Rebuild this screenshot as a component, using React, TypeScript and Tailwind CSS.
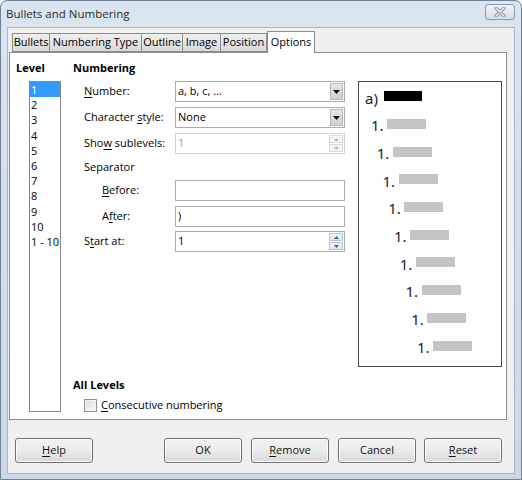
import React from "react";

function Mn({ text, idx }: { text: string; idx: number }) {
  return (
    <>
      {text.slice(0, idx)}
      <span className="underline underline-offset-[2px] decoration-[1px]">{text[idx]}</span>
      {text.slice(idx + 1)}
    </>
  );
}

function DropBtn() {
  return (
    <div className="ml-auto mr-[1px] w-[13px] h-[17px] bg-gradient-to-b from-[#e6e6e6] to-[#cfcfcf] border border-[#b9b9b9] flex items-center justify-center">
      <svg width="7" height="4" viewBox="0 0 7 4">
        <path d="M0 0 L7 0 L3.5 4 Z" fill="#111" />
      </svg>
    </div>
  );
}

function Spin({ enabled }: { enabled: boolean }) {
  const c = enabled ? "#3f5f8c" : "#b8b8b8";
  return (
    <div className="ml-auto mr-[1px] w-[14px] h-[17px] flex flex-col gap-[1px]">
      <div className={`flex-1 flex items-center justify-center border ${enabled ? "border-[#b7c3d3] bg-gradient-to-b from-[#f3f6fa] to-[#dfe6ee]" : "border-[#dadada] bg-[#f4f4f4]"}`}>
        <svg width="5" height="3" viewBox="0 0 5 3">
          <path d="M0 3 L5 3 L2.5 0 Z" fill={c} />
        </svg>
      </div>
      <div className={`flex-1 flex items-center justify-center border ${enabled ? "border-[#b7c3d3] bg-gradient-to-b from-[#f3f6fa] to-[#dfe6ee]" : "border-[#dadada] bg-[#f4f4f4]"}`}>
        <svg width="5" height="3" viewBox="0 0 5 3">
          <path d="M0 0 L5 0 L2.5 3 Z" fill={c} />
        </svg>
      </div>
    </div>
  );
}

function Field({ children, disabled }: { children?: React.ReactNode; disabled?: boolean }) {
  return (
    <div
      className={`w-[170px] h-[21px] bg-white border flex items-center pl-[2px] ${
        disabled ? "border-[#d3d3d3] text-[#a0a0a0]" : "border-[#abadb3]"
      }`}
    >
      {children}
    </div>
  );
}

function Btn({ children, className = "" }: { children: React.ReactNode; className?: string }) {
  return (
    <div
      className={`w-[78px] h-[25px] rounded-[3px] border border-[#707070] bg-gradient-to-b from-[#f2f2f2] via-[#ebebeb] to-[#d9d9d9] shadow-[inset_0_0_0_1px_#fcfcfc] flex items-center justify-center text-[#111] ${className}`}
    >
      {children}
    </div>
  );
}

export default function App() {
  const levels = ["1", "2", "3", "4", "5", "6", "7", "8", "9", "10", "1 - 10"];
  const tabs = ["Bullets", "Numbering Type", "Outline", "Image", "Position"];
  const tabW = ["w-[38px]", "w-[92px]", "w-[41px]", "w-[38px]", "w-[46px]"];
  const rows = Array.from({ length: 10 }, (_, i) => i);

  return (
    <div className="w-[522px] h-[480px] overflow-hidden font-['Open_Sans',sans-serif] text-[11px] text-black bg-gradient-to-b from-[#dbe5f0] to-[#cbd8e6] border border-[#6f8195] rounded-t-[7px] flex flex-col">
      {/* title bar */}
      <div className="h-[26px] flex items-center pl-[5px] pr-[6px]">
        <span className="text-[11.5px] text-[#2b2b2b]">Bullets and Numbering</span>
        <div className="ml-auto mt-[-4px] w-[30px] h-[16px] rounded-[3px] border border-[#8d9cb0] bg-gradient-to-b from-[#eef3f8] to-[#d3deea] flex items-center justify-center">
          <svg width="12" height="10" viewBox="0 0 12 10">
            <path d="M2 1 L10 9 M10 1 L2 9" stroke="#7f8ea1" strokeWidth="3.2" strokeLinecap="round" />
            <path d="M2 1 L10 9 M10 1 L2 9" stroke="#f4f6f9" strokeWidth="1.4" strokeLinecap="round" />
          </svg>
        </div>
      </div>

      {/* body */}
      <div className="mx-[6px] mb-[5px] flex-1 bg-[#f0f0f0] border border-[#a9b6c6] flex flex-col">
        {/* tabs */}
        <div className="mt-[3px] ml-[4px] h-[22px] -mb-px relative z-10 flex items-end">
          {tabs.map((t, i) => (
            <div
              key={t}
              className={`${tabW[i]} h-[19px] mb-px border border-[#898c95] ${i > 0 ? "border-l-0" : ""} bg-gradient-to-b from-[#f0f0f0] to-[#d9d9d9] flex items-center justify-center whitespace-nowrap`}
            >
              {t}
            </div>
          ))}
          <div className="w-[48px] h-[22px] border border-b-0 border-[#898c95] bg-white flex items-center justify-center pb-[1px]">
            Options
          </div>
        </div>

        {/* panel */}
        <div className="ml-px w-[498px] h-[368px] bg-white border border-[#898c95] flex">
          {/* level column */}
          <div className="w-[63px] flex flex-col">
            <div className="h-[28px] pl-[6px] pt-[7px] font-bold leading-[16px]">Level</div>
            <div className="ml-[19px] w-[32px] h-[331px] border border-[#828790] leading-[15.2px]">
              {levels.map((l, i) => (
                <div
                  key={l}
                  className={`h-[15.2px] pl-[1px] whitespace-nowrap ${i === 0 ? "bg-[#3399ff] text-white" : ""}`}
                >
                  {l}
                </div>
              ))}
            </div>
          </div>

          {/* right section */}
          <div className="flex-1 flex flex-col">
            <div className="h-[28px] pt-[7px] font-bold leading-[16px]">Numbering</div>
            <div className="flex">
              {/* form */}
              <div className="w-[285px] flex flex-col">
                <div className="flex items-center h-[21px]">
                  <div className="w-[102px] pl-[11px]">
                    <Mn text="Number:" idx={0} />
                  </div>
                  <Field>
                    <span>a, b, c, ...</span>
                    <DropBtn />
                  </Field>
                </div>
                <div className="flex items-center h-[21px] mt-[5px]">
                  <div className="w-[102px] pl-[11px]">
                    <Mn text="Character style:" idx={10} />
                  </div>
                  <Field>
                    <span>None</span>
                    <DropBtn />
                  </Field>
                </div>
                <div className="flex items-center h-[21px] mt-[5px]">
                  <div className="w-[102px] pl-[11px]">
                    <Mn text="Show sublevels:" idx={3} />
                  </div>
                  <Field disabled>
                    <span>1</span>
                    <Spin enabled={false} />
                  </Field>
                </div>
                <div className="flex items-center h-[26px]">
                  <div className="pl-[11px]">Separator</div>
                </div>
                <div className="flex items-center h-[21px]">
                  <div className="w-[102px] pl-[29px]">
                    <Mn text="Before:" idx={0} />
                  </div>
                  <Field />
                </div>
                <div className="flex items-center h-[21px] mt-[5px]">
                  <div className="w-[102px] pl-[29px]">
                    <Mn text="After:" idx={1} />
                  </div>
                  <Field>
                    <span>)</span>
                  </Field>
                </div>
                <div className="flex items-center h-[21px] mt-[4px]">
                  <div className="w-[102px] pl-[11px]">
                    <Mn text="Start at:" idx={1} />
                  </div>
                  <Field>
                    <span>1</span>
                    <Spin enabled />
                  </Field>
                </div>
              </div>

              {/* preview */}
              <div className="w-[144px] h-[286px] border border-[#4a4a4a] bg-white pt-[2px] text-[15px] text-[#222] font-['Noto_Sans',sans-serif]">
                {rows.map((i) => (
                  <div
                    key={i}
                    className="h-[27.7px] flex items-center"
                    style={{ paddingLeft: i === 0 ? 6 : 12 + 5.75 * (i - 1) }}
                  >
                    <span className={i === 0 ? "w-[19px]" : "w-[16px]"}>{i === 0 ? "a)" : "1."}</span>
                    <div
                      className={`h-[10px] mb-[3px] ${i === 0 ? "w-[38px] bg-black" : "w-[39px] bg-[#c4c4c4]"}`}
                    />
                  </div>
                ))}
              </div>
            </div>

            <div className="mt-[10px] font-bold leading-[16px]">All Levels</div>
            <div className="mt-[4px] flex items-center h-[16px] pl-[11px]">
              <div className="w-[13px] h-[13px] border border-[#8e8f8f] bg-gradient-to-br from-[#dcdcdc] to-[#fbfbfb] shadow-[inset_0_0_0_1px_#f4f4f4]" />
              <span className="ml-[4px]">
                <Mn text="Consecutive numbering" idx={0} />
              </span>
            </div>
          </div>
        </div>

        {/* buttons */}
        <div className="mt-[18px] pl-[7px] flex">
          <Btn>
            <Mn text="Help" idx={0} />
          </Btn>
          <Btn className="ml-[71px]">OK</Btn>
          <Btn className="ml-[9px]">
            <Mn text="Remove" idx={0} />
          </Btn>
          <Btn className="ml-[9px]">Cancel</Btn>
          <Btn className="ml-[8px]">
            <Mn text="Reset" idx={0} />
          </Btn>
        </div>
      </div>
    </div>
  );
}
